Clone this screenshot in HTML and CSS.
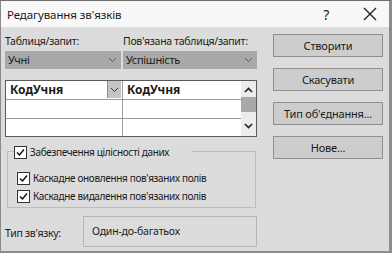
FILE: index.html
```html
<!DOCTYPE html>
<html lang="uk">
<head>
    <meta charset="UTF-8" />
    <title>Редагування зв'язків</title>
    <link rel="stylesheet" href="styles.css">
</head>
<body>

<div class="window">
    <div class="titlebar">
        <span class="title">Редагування зв'язків</span>
        <span class="help">?</span>
        <svg class="close" width="14" height="14" viewBox="0 0 14 14"><path d="M1 1L13 13M13 1L1 13" stroke="#222" stroke-width="1.4" fill="none"/></svg>
    </div>

    <div class="content">
        <div class="main">
            <div class="labels">
                <span class="label-left">Таблиця/запит:</span>
                <span>Пов'язана таблиця/запит:</span>
            </div>
            <div class="selects">
                <div class="select select-left">Учні <svg class="chev" width="9" height="6" viewBox="0 0 9 6"><path d="M1 1L4.5 4.5L8 1" stroke="#555" fill="none"/></svg></div>
                <div class="select select-right">Успішність <svg class="chev" width="9" height="6" viewBox="0 0 9 6"><path d="M1 1L4.5 4.5L8 1" stroke="#555" fill="none"/></svg></div>
            </div>

            <div class="fields">
                <div class="rows">
                    <div class="row">
                        <div class="cell cell-left">КодУчня
                            <span class="drop"><svg width="9" height="6" viewBox="0 0 9 6"><path d="M1 1L4.5 4.5L8 1" stroke="#333" fill="none"/></svg></span>
                        </div>
                        <div class="cell">КодУчня</div>
                    </div>
                    <div class="row"><div class="cell cell-left"></div><div class="cell"></div></div>
                    <div class="row"><div class="cell cell-left"></div><div class="cell"></div></div>
                    <div class="row"><div class="cell cell-left"></div><div class="cell"></div></div>
                </div>
                <div class="scrollbar">
                    <svg width="9" height="6" viewBox="0 0 9 6"><path d="M1 5L4.5 1.5L8 5" stroke="#222" stroke-width="1.6" fill="none"/></svg>
                    <div class="thumb"></div>
                    <svg class="down" width="9" height="6" viewBox="0 0 9 6"><path d="M1 1L4.5 4.5L8 1" stroke="#222" stroke-width="1.6" fill="none"/></svg>
                </div>
            </div>

            <div class="group">
                <label class="check legend"><span class="box"><svg width="11" height="11" viewBox="0 0 11 11"><path d="M2 5.5L4.5 8L9 2.5" stroke="#111" stroke-width="1.5" fill="none"/></svg></span>Забезпечення цілісності даних</label>
                <label class="check"><span class="box"><svg width="11" height="11" viewBox="0 0 11 11"><path d="M2 5.5L4.5 8L9 2.5" stroke="#111" stroke-width="1.5" fill="none"/></svg></span>Каскадне оновлення пов'язаних полів</label>
                <label class="check"><span class="box"><svg width="11" height="11" viewBox="0 0 11 11"><path d="M2 5.5L4.5 8L9 2.5" stroke="#111" stroke-width="1.5" fill="none"/></svg></span>Каскадне видалення пов'язаних полів</label>
            </div>

            <div class="relation">
                <span class="relation-label">Тип зв'язку:</span>
                <div class="relation-box">Один-до-багатьох</div>
            </div>
        </div>

        <div class="actions">
            <button class="btn">Створити</button>
            <button class="btn">Скасувати</button>
            <button class="btn">Тип об'єднання...</button>
            <button class="btn">Нове...</button>
        </div>
    </div>
</div>

</body>
</html>
```

FILE: styles.css
```css
html, body {
    margin: 0;
    padding: 0;
}

body {
    font-family: "Noto Sans", "Open Sans", sans-serif;
    font-size: 10.5px;
    letter-spacing: -0.3px;
    color: #1a1a1a;
    background-color: #dcdcdc;
}

.window {
    width: 392px;
    height: 253px;
    box-sizing: border-box;
    border-top: 1px solid #6e6e6e;
    border-left: 1px solid #8a8a8a;
    border-right: 3px solid #8c8c8c;
    border-bottom: 2px solid #8c8c8c;
    background-color: #dcdcdc;
}

.titlebar {
    height: 26px;
    background-color: #f8f8f8;
    display: flex;
    align-items: center;
    padding: 0 6px;
}

.title {
    font-size: 11.5px;
    letter-spacing: -0.1px;
    flex: 1;
}

.help {
    font-size: 14px;
    margin-right: 34px;
}

.close {
    margin-right: 6px;
}

.content {
    display: flex;
    padding: 4px 0 0 4px;
}

.main {
    width: 252px;
}

.labels {
    display: flex;
    height: 14px;
    line-height: 14px;
    margin-top: 3px;
    white-space: nowrap;
}

.label-left {
    width: 118px;
}

.selects {
    display: flex;
    gap: 2px;
    margin-top: 3px;
}

.select {
    height: 18px;
    line-height: 18px;
    background-color: #a9a9a9;
    padding-left: 3px;
    box-sizing: border-box;
    position: relative;
    font-size: 11px;
}

.select-left {
    width: 116px;
}

.select-right {
    width: 134px;
}

.chev {
    position: absolute;
    right: 4px;
    top: 6px;
}

.fields {
    display: flex;
    margin-top: 11px;
    height: 57px;
    box-sizing: border-box;
    border: 1px solid #5a5a5a;
    background-color: #ffffff;
    overflow: hidden;
}

.rows {
    flex: 1;
}

.row {
    display: flex;
    height: 18px;
    border-bottom: 1px solid #9a9a9a;
}

.cell {
    flex: 1;
    font-size: 12px;
    letter-spacing: 0;
    font-weight: bold;
    line-height: 17px;
    padding-left: 4px;
}

.cell-left {
    flex: none;
    width: 112px;
    border-right: 1px solid #9a9a9a;
    position: relative;
}

.drop {
    position: absolute;
    right: 1px;
    top: 0;
    width: 13px;
    height: 17px;
    background-color: #c4c4c4;
    border-left: 1px solid #8a8a8a;
    display: flex;
    align-items: center;
    justify-content: center;
}

.scrollbar {
    width: 15px;
    background-color: #ececec;
    display: flex;
    flex-direction: column;
    align-items: center;
    padding-top: 6px;
}

.thumb {
    width: 15px;
    height: 15px;
    margin-top: 4px;
    background-color: #a9a9a9;
}

.scrollbar .down {
    margin-top: 11px;
}

.group {
    margin: 14px 1px 0 2px;
    height: 57px;
    border: 1px solid #bdbdbd;
    box-sizing: border-box;
    padding: 0 0 0 9px;
    font-size: 10px;
    letter-spacing: -0.35px;
}

.check {
    display: flex;
    align-items: center;
    height: 18px;
}

.check .box {
    width: 11px;
    height: 11px;
    border: 1px solid #333;
    background-color: #ffffff;
    margin-right: 3px;
    display: flex;
}

.legend {
    margin: -9px 0 8px -3px;
    padding-right: 23px;
    width: max-content;
    background-color: #dcdcdc;
}

.relation {
    display: flex;
    align-items: center;
    margin-top: 8px;
}

.relation-label {
    width: 78px;
    padding-top: 3px;
}

.relation-box {
    width: 174px;
    height: 31px;
    box-sizing: border-box;
    border: 1px solid #b5b5b5;
    padding: 0 0 2px 8px;
    display: flex;
    align-items: center;
    font-size: 10.5px;
    letter-spacing: -0.2px;
}

.actions {
    display: flex;
    flex-direction: column;
    gap: 11px;
    margin-left: 16px;
    padding-top: 3px;
}

.btn {
    width: 110px;
    height: 23px;
    font-family: "Noto Sans", "Open Sans", sans-serif;
    font-size: 11px;
    letter-spacing: -0.2px;
    color: #1a1a1a;
    background-color: #cdcdcd;
    border: 1px solid #8e8e8e;
    padding: 0;
}
```
